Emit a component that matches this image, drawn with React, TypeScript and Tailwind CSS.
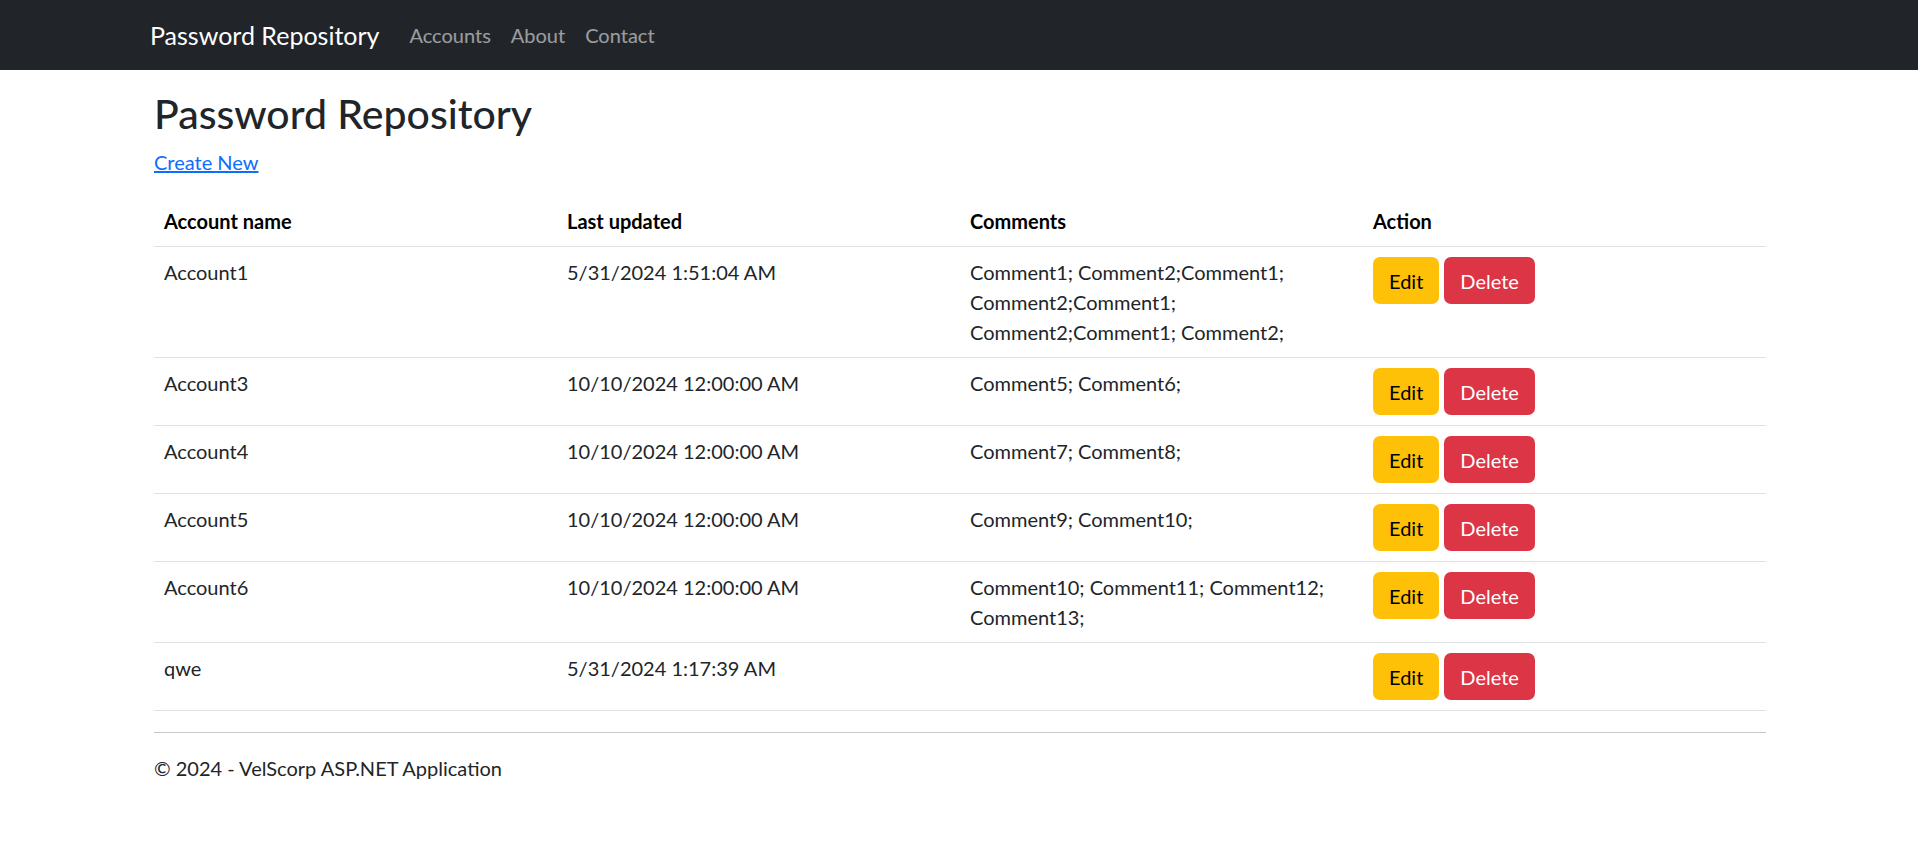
import React from 'react';

interface Account {
  name: string;
  updated: string;
  comments: string[];
}

const accounts: Account[] = [
  {
    name: 'Account1',
    updated: '5/31/2024 1:51:04 AM',
    comments: ['Comment1; Comment2;Comment1;', 'Comment2;Comment1;', 'Comment2;Comment1; Comment2;'],
  },
  { name: 'Account3', updated: '10/10/2024 12:00:00 AM', comments: ['Comment5; Comment6;'] },
  { name: 'Account4', updated: '10/10/2024 12:00:00 AM', comments: ['Comment7; Comment8;'] },
  { name: 'Account5', updated: '10/10/2024 12:00:00 AM', comments: ['Comment9; Comment10;'] },
  {
    name: 'Account6',
    updated: '10/10/2024 12:00:00 AM',
    comments: ['Comment10; Comment11; Comment12;', 'Comment13;'],
  },
  { name: 'qwe', updated: '5/31/2024 1:17:39 AM', comments: [] },
];

export default function App() {
  return (
    <div className="min-h-[866px] bg-white text-[20px] leading-[30px] text-[#212529] font-['Lato','Liberation_Sans',sans-serif]">
      {/* Navbar */}
      <nav className="h-[70px] bg-[#212529]">
        <div className="mx-auto flex h-full w-[1618px] items-center">
          <a href="#" className="mr-[20px] text-[25px] leading-[37px] text-white">
            Password Repository
          </a>
          <ul className="flex">
            {['Accounts', 'About', 'Contact'].map((item) => (
              <li key={item}>
                <a href="#" className="px-[10px] text-[20px] text-white/55">
                  {item}
                </a>
              </li>
            ))}
          </ul>
        </div>
      </nav>

      <main className="mx-auto w-[1614px] pl-[2px] pt-[20px]">
        <h2 className="mb-[9px] text-[41px] font-medium leading-[48px]">Password Repository</h2>
        <p className="mb-[20px]">
          <a href="#" className="text-[#0d6efd] underline">
            Create New
          </a>
        </p>

        <table className="w-full table-fixed border-collapse">
          <thead>
            <tr className="border-b border-[#dee2e6]">
              <th className="w-1/4 px-[10px] pt-[9px] pb-[10px] text-left font-bold text-black">Account name</th>
              <th className="w-1/4 px-[10px] pt-[9px] pb-[10px] text-left font-bold text-black">Last updated</th>
              <th className="w-1/4 px-[10px] pt-[9px] pb-[10px] text-left font-bold text-black">Comments</th>
              <th className="w-1/4 px-[10px] pt-[9px] pb-[10px] text-left font-bold text-black">Action</th>
            </tr>
          </thead>
          <tbody>
            {accounts.map((a) => (
              <tr key={a.name} className="border-b border-[#dee2e6] align-top">
                <td className="p-[10px]">{a.name}</td>
                <td className="p-[10px]">{a.updated}</td>
                <td className="p-[10px]">
                  {a.comments.map((c, i) => (
                    <div key={i}>{c}</div>
                  ))}
                </td>
                <td className="p-[10px]">
                  <div className="flex gap-[5px]">
                    <button className="h-[47px] rounded-[7px] bg-[#ffc107] px-[16px] text-black">Edit</button>
                    <button className="h-[47px] rounded-[7px] bg-[#dc3545] px-[16px] text-white">Delete</button>
                  </div>
                </td>
              </tr>
            ))}
          </tbody>
        </table>

        <hr className="mt-[21px] mb-[20px] border-t border-[#c8c9ca]" />
        <footer>
          <p>© 2024 - VelScorp ASP.NET Application</p>
        </footer>
      </main>
    </div>
  );
}
